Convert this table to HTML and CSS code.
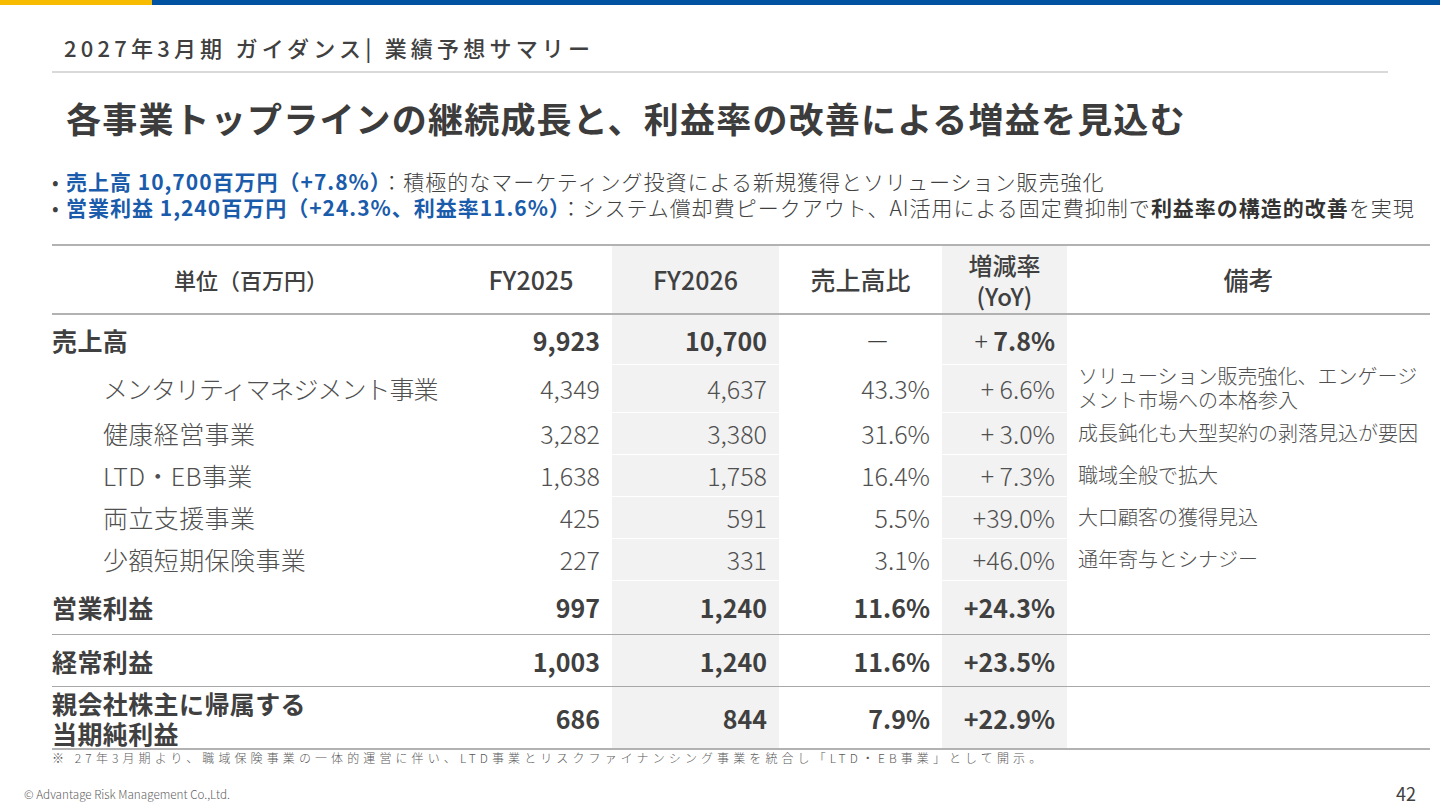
FILE: index.html
```html
<!DOCTYPE html>
<html lang="ja">
<head>
<meta charset="utf-8">
<title>2027年3月期 ガイダンス | 業績予想サマリー</title>
<link rel="stylesheet" href="styles.css">
</head>
<body>
<div class="topbar"><div class="bar-y"></div><div class="bar-b"></div></div>
<header class="section-head">2027年3月期 ガイダンス| 業績予想サマリー</header>
<h1 class="title">各事業トップラインの継続成長と、利益率の改善による増益を見込む</h1>
<ul class="points">
  <li><span class="dot">•</span><span class="hl">売上高 10,700百万円（+7.8%）</span>：積極的なマーケティング投資による新規獲得とソリューション販売強化</li>
  <li><span class="dot">•</span><span class="hl">営業利益 1,240百万円（+24.3%、利益率11.6%）</span>：システム償却費ピークアウト、AI活用による固定費抑制で<b class="em">利益率の構造的改善</b>を実現</li>
</ul>
<table class="fin">
  <colgroup>
    <col class="c-label"><col class="c-fy25"><col class="c-fy26"><col class="c-ratio"><col class="c-yoy"><col class="c-note">
  </colgroup>
  <thead>
    <tr>
      <th class="h-unit">単位（百万円）</th>
      <th>FY2025</th>
      <th class="g">FY2026</th>
      <th>売上高比</th>
      <th class="g h-yoy">増減率<br>(YoY)</th>
      <th>備考</th>
    </tr>
  </thead>
  <tbody>
    <tr class="main r-sales">
      <td class="lbl">売上高</td>
      <td class="num">9,923</td>
      <td class="num g">10,700</td>
      <td class="num dash">－</td>
      <td class="num g"><span class="thin">+ </span>7.8%</td>
      <td class="rmk"></td>
    </tr>
    <tr class="sub r-tall">
      <td class="lbl tight">メンタリティマネジメント事業</td>
      <td class="num">4,349</td>
      <td class="num g">4,637</td>
      <td class="num">43.3%</td>
      <td class="num g">+ 6.6%</td>
      <td class="rmk">ソリューション販売強化、エンゲージメント市場への本格参入</td>
    </tr>
    <tr class="sub">
      <td class="lbl">健康経営事業</td>
      <td class="num">3,282</td>
      <td class="num g">3,380</td>
      <td class="num">31.6%</td>
      <td class="num g">+ 3.0%</td>
      <td class="rmk">成長鈍化も大型契約の剥落見込が要因</td>
    </tr>
    <tr class="sub">
      <td class="lbl">LTD・EB事業</td>
      <td class="num">1,638</td>
      <td class="num g">1,758</td>
      <td class="num">16.4%</td>
      <td class="num g">+ 7.3%</td>
      <td class="rmk">職域全般で拡大</td>
    </tr>
    <tr class="sub">
      <td class="lbl">両立支援事業</td>
      <td class="num">425</td>
      <td class="num g">591</td>
      <td class="num">5.5%</td>
      <td class="num g">+39.0%</td>
      <td class="rmk">大口顧客の獲得見込</td>
    </tr>
    <tr class="sub">
      <td class="lbl">少額短期保険事業</td>
      <td class="num">227</td>
      <td class="num g">331</td>
      <td class="num">3.1%</td>
      <td class="num g">+46.0%</td>
      <td class="rmk">通年寄与とシナジー</td>
    </tr>
    <tr class="main r-op">
      <td class="lbl">営業利益</td>
      <td class="num">997</td>
      <td class="num g">1,240</td>
      <td class="num">11.6%</td>
      <td class="num g">+24.3%</td>
      <td class="rmk"></td>
    </tr>
    <tr class="main r-ord">
      <td class="lbl">経常利益</td>
      <td class="num">1,003</td>
      <td class="num g">1,240</td>
      <td class="num">11.6%</td>
      <td class="num g">+23.5%</td>
      <td class="rmk"></td>
    </tr>
    <tr class="main r-net">
      <td class="lbl">親会社株主に帰属する<br>当期純利益</td>
      <td class="num">686</td>
      <td class="num g">844</td>
      <td class="num">7.9%</td>
      <td class="num g">+22.9%</td>
      <td class="rmk"></td>
    </tr>
  </tbody>
</table>
<p class="footnote">※ 27年3月期より、職域保険事業の一体的運営に伴い、LTD事業とリスクファイナンシング事業を統合し「LTD・EB事業」として開示。</p>
<footer class="foot">
  <span class="copy">© Advantage Risk Management Co.,Ltd.</span>
  <span class="page">42</span>
</footer>
</body>
</html>
```

FILE: styles.css
```css
* { box-sizing: border-box; margin: 0; padding: 0; }
html, body { width: 1440px; height: 810px; overflow: hidden; background: #fff; }
body {
  font-family: "Noto Sans CJK JP", "Noto Sans", sans-serif;
  color: #404040;
}

.topbar { display: flex; height: 5px; }
.bar-y { width: 152px; background: #f7bc00; }
.bar-b { flex: 1; background: #0153a1; }

.section-head {
  margin: 0 52px;
  padding: 28px 12px 10px;
  border-bottom: 2px solid #d9d9d9;
  font-size: 22px;
  line-height: 28px;
  font-weight: 500;
  letter-spacing: 4.2px;
  color: #404040;
}

.title {
  margin: 22px 0 0 66px;
  font-size: 35px;
  line-height: 46px;
  font-weight: 700;
  letter-spacing: 1.2px;
  color: #3c3c3c;
}

.points {
  list-style: none;
  margin: 27px 0 0 52px;
  font-size: 21px;
  line-height: 26px;
  font-weight: 300;
  letter-spacing: 1px;
  color: #404040;
}
.points .dot { display: inline-block; width: 14px; letter-spacing: 0; }
.points .hl { color: #1a5cab; font-weight: 700; }
.points .em { font-weight: 700; color: #333; }

.fin {
  margin: 24px 0 0 52px;
  width: 1378px;
  table-layout: fixed;
  border-collapse: separate;
  border-spacing: 0;
}
.c-label { width: 398px; }
.c-fy25 { width: 162px; }
.c-fy26 { width: 167px; }
.c-ratio { width: 163px; }
.c-yoy { width: 125px; }
.c-note { width: 363px; }

.fin th {
  height: 71px;
  border-top: 2px solid #b2b2b2;
  border-bottom: 2px solid #b2b2b2;
  font-size: 25px;
  line-height: 31px;
  font-weight: 500;
  color: #404040;
  text-align: center;
  vertical-align: middle;
}
.fin th.h-unit { font-size: 22px; }
.fin th.h-yoy { font-size: 24px; }

.fin td { vertical-align: middle; padding: 0; }
.fin .g { background: #f2f2f2; }
.fin .num { text-align: right; padding-right: 12px; font-size: 25px; }
.fin .lbl { font-size: 25px; letter-spacing: 0.4px; white-space: nowrap; }
.fin .lbl.tight { letter-spacing: -1px; }
.fin .rmk { padding-left: 11px; font-size: 20px; line-height: 24px; font-weight: 300; color: #505050; }

.fin tr.main td { font-weight: 700; color: #404040; }
.fin tr.main td.rmk { font-weight: 300; }
.fin tr.sub td { font-weight: 300; color: #505050; }
.fin tr.sub .lbl { padding-left: 51px; }
.fin tr.sub td.g, .fin tr.r-op td.g { box-shadow: inset 0 1px 0 #fff; }

.fin .thin { font-weight: 300; }
.fin tr.main td.dash { text-align: center; padding: 0 0 0 34px; font-weight: 300; }

.r-sales td { height: 49px; }
.r-tall td { height: 49px; }
.sub td { height: 42px; }
.r-op td { height: 54px; }
.r-ord td { height: 52px; border-top: 1px solid #a8a8a8; }
.r-net td { height: 64px; border-top: 1px solid #a8a8a8; border-bottom: 2px solid #b2b2b2; }
.r-net .lbl { line-height: 30px; }

.footnote {
  margin-left: 52px;
  font-size: 12px;
  line-height: 16px;
  letter-spacing: 4.1px;
  font-weight: 300;
  color: #595959;
  white-space: nowrap;
}

.foot {
  display: flex;
  justify-content: space-between;
  align-items: center;
  margin-top: 14px;
  padding: 0 24px;
}
.copy { font-size: 11.7px; font-weight: 300; color: #606060; }
.page { font-size: 18px; color: #404040; }
```
